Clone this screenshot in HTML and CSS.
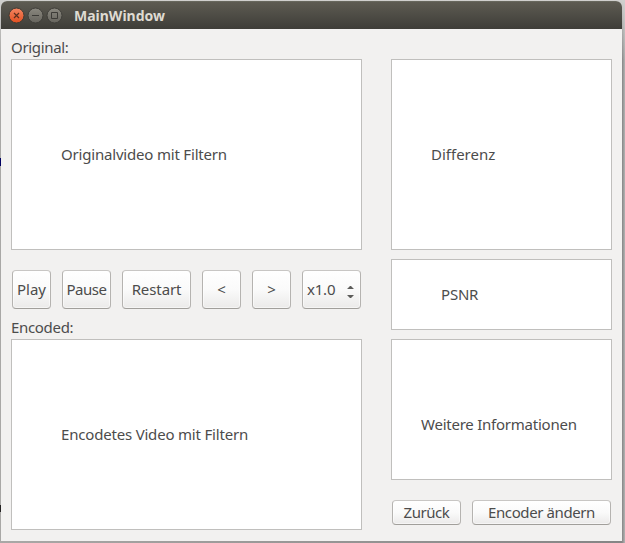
FILE: index.html
```html
<!DOCTYPE html>
<html lang="de">
<head>
<meta charset="utf-8">
<title>MainWindow</title>
<link rel="stylesheet" href="styles.css">
</head>
<body>
<div class="window">
  <header class="titlebar">
    <svg class="controls" width="56" height="18" viewBox="0 0 56 18">
      <defs>
        <linearGradient id="close" x1="0" y1="0" x2="0" y2="1"><stop offset="0" stop-color="#f38662"/><stop offset="1" stop-color="#e24f20"/></linearGradient>
        <linearGradient id="gray" x1="0" y1="0" x2="0" y2="1"><stop offset="0" stop-color="#8a887f"/><stop offset="1" stop-color="#66645d"/></linearGradient>
      </defs>
      <circle cx="8.500" cy="8.500" r="7.500" fill="url(#close)" stroke="#3f3a33"/>
      <circle cx="27.500" cy="8.500" r="7.500" fill="url(#gray)" stroke="#3f3e39"/>
      <circle cx="46.500" cy="8.500" r="7.500" fill="url(#gray)" stroke="#3f3e39"/>
      <path d="M6 6l5 5M11 6l-5 5" stroke="#5b2f1e" stroke-width="1.200"/>
      <path d="M24 8.500h7" stroke="#3c3b37"/>
      <path d="M43.500 5.500h6v6h-6z" fill="none" stroke="#3c3b37"/>
    </svg>
    <h1 class="title">MainWindow</h1>
  </header>
  <main class="content">
    <section class="players">
      <div class="label">Original:</div>
      <div class="view tall"><span class="snug">Originalvideo mit Filtern</span></div>
      <div class="toolbar">
        <button class="play"><span>Play</span></button>
        <button class="pause"><span>Pause</span></button>
        <button class="restart"><span>Restart</span></button>
        <button class="step"><span>&lt;</span></button>
        <button class="step"><span>&gt;</span></button>
        <button class="speed"><span>x1.0</span>
          <svg width="7" height="12" viewBox="0 0 7 12"><path d="M0 3L3.500 -.5 7 3zM0 9L3.500 12.500 7 9z" fill="#5c5c5a"/></svg>
        </button>
      </div>
      <div class="label">Encoded:</div>
      <div class="view tall"><span class="snug">Encodetes Video mit Filtern</span></div>
    </section>
    <aside class="details">
      <div class="view tall diff"><span>Differenz</span></div>
      <div class="view psnr"><span>PSNR</span></div>
      <div class="view info"><span>Weitere Informationen</span></div>
      <div class="actions">
        <button class="back"><span>Zurück</span></button>
        <button class="encoder"><span>Encoder ändern</span></button>
      </div>
    </aside>
  </main>
</div>
<i class="backdrop-mark upper"></i>
<i class="backdrop-mark lower"></i>
</body>
</html>
```
FILE: styles.css
```css
* { box-sizing: border-box; }
html { height: 100%; background: #b5b4b2; }
body {
  position: relative;
  margin: 0;
  height: 543px;
  padding: 1px 3px 2px 1px;
  overflow: hidden;
  background:
    linear-gradient(#d0d0ce, rgba(208, 208, 206, 0) 60px),
    linear-gradient(90deg, #a9a8a6 0 1px, #858585 622px, #b4b4b4 625px);
  font: 15px/20px "Noto Sans", "Open Sans", sans-serif;
  color: #4c4c4c;
}
.window {
  height: 540px;
  border-radius: 6px 6px 0 0;
  overflow: hidden;
  background: #f2f1f0;
}
.titlebar {
  height: 28px;
  display: flex;
  align-items: center;
  padding-left: 7px;
  background: linear-gradient(#5d5b52, #3e3d38);
  border-top: 1px solid #67675d;
}
.controls { display: block; }
.title {
  margin: 0 0 0 10px;
  font-size: 14px;
  line-height: 20px;
  color: #dfdbd2;
}
.content {
  display: flex;
  justify-content: space-between;
  padding: 8px 10px 0;
}
.players { width: 351px; }
.details { width: 221px; padding-top: 22px; }
.label { height: 22px; letter-spacing: -.32px; }
.view {
  background: #fff;
  border: 1px solid #c0bfbd;
  white-space: nowrap;
}
.tall { height: 191px; padding: 84px 0 0 49px; }
.snug { letter-spacing: -.19px; }
.diff { padding-left: 39px; }
.psnr { height: 71px; margin-top: 9px; padding: 24px 0 0 49px; letter-spacing: -.2px; }
.info { height: 141px; margin-top: 9px; padding: 74px 0 0 29px; letter-spacing: -.24px; }
.toolbar {
  display: flex;
  justify-content: space-between;
  height: 39px;
  margin: 20px 1px 8px;
}
button {
  display: flex;
  align-items: center;
  justify-content: center;
  padding: 0 0 2px;
  font: inherit;
  color: inherit;
  white-space: nowrap;
  border: 1px solid #b5b3b0;
  border-top-color: #c8c6c4;
  border-bottom-color: #a19f9b;
  border-radius: 4px;
  background: linear-gradient(#fff, #fafafa 50%, #ebeae9);
  box-shadow: inset 0 0 0 1px rgba(255, 255, 255, .5);
}
.play, .step { width: 39px; }
.pause { width: 49px; letter-spacing: -.5px; }
.restart { width: 69px; letter-spacing: -.1px; }
.speed { width: 59px; justify-content: space-between; padding: 0 6px 2px 4px; letter-spacing: -.2px; }
.speed svg { margin-top: 6px; }
.actions { display: flex; justify-content: space-between; height: 25px; margin: 20px 1px 0; }
.back { width: 69px; letter-spacing: -.45px; }
.encoder { width: 139px; letter-spacing: -.4px; }
.backdrop-mark {
  position: absolute;
  left: 0;
  width: 1px;
}
.upper { top: 158px; height: 8px; background: #000060; }
.lower { top: 505px; height: 7px; background: #242222; }
```
